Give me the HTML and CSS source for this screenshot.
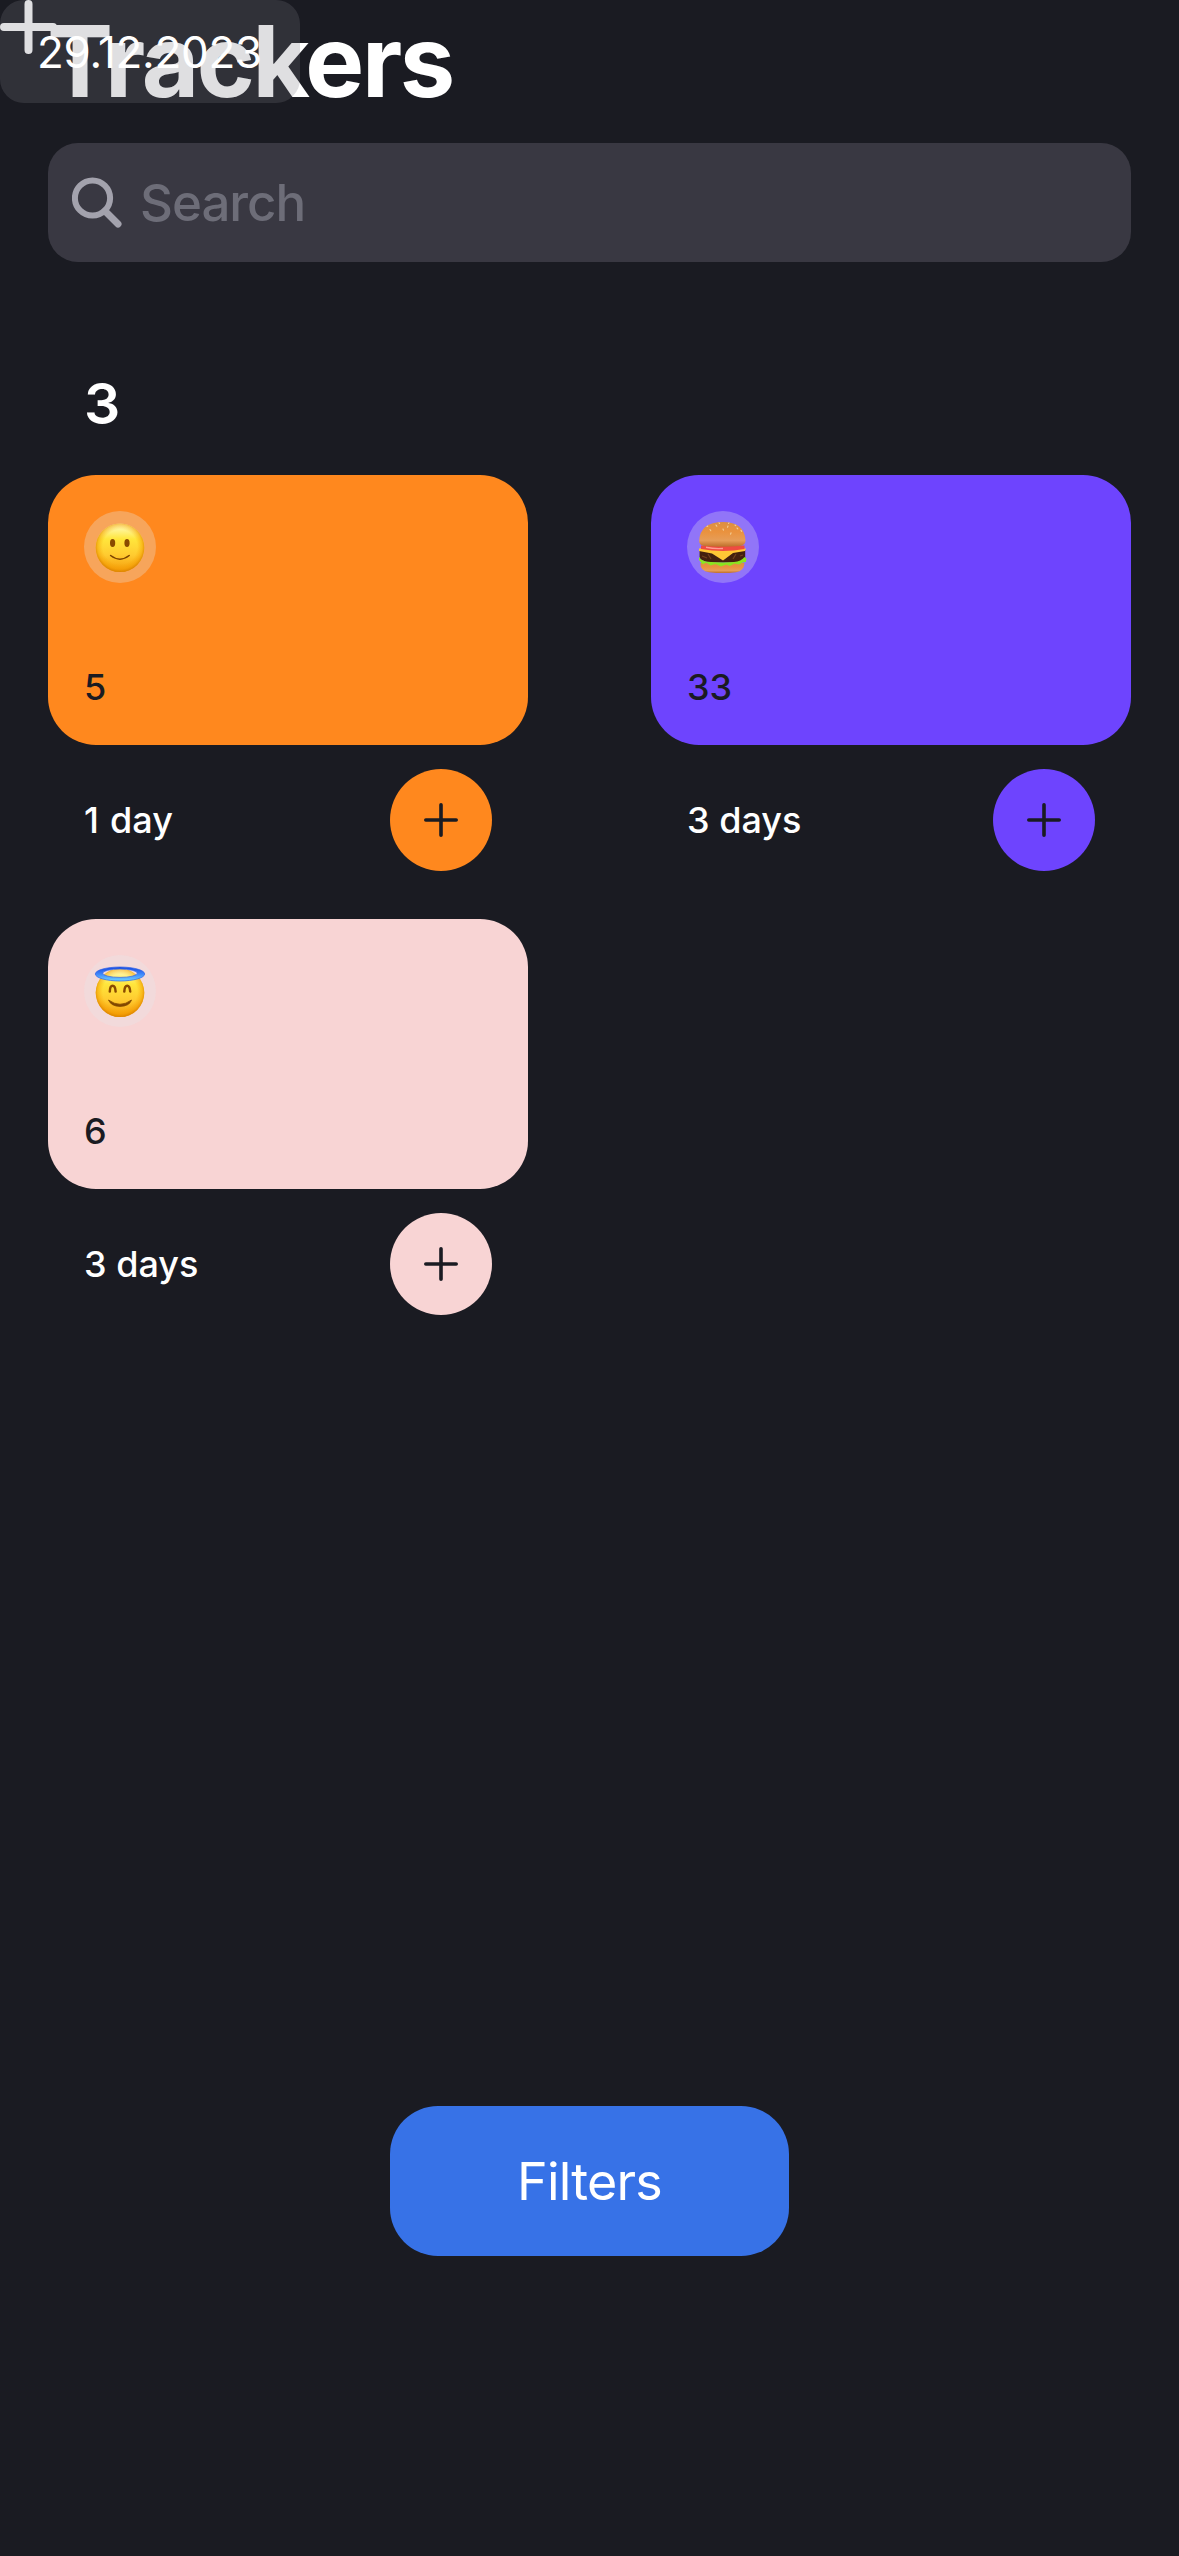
FILE: index.html
```html
<!DOCTYPE html>
<html lang="en">
<head>
<meta charset="utf-8">
<title>Trackers</title>
<link rel="stylesheet" href="styles.css">
</head>
<body>
<main class="screen">
  <h1 class="title"><span class="title-text">Trackers</span></h1>
  <svg class="add-icon" viewBox="0 0 57 54"><path d="M4 27H53M28.5 4V50"/></svg>
  <div class="date"><span class="date-text">29.12.2023</span></div>

  <div class="search">
    <svg class="search-icon" viewBox="0 0 50 52"><circle cx="20.5" cy="21" r="17.6"/><path d="M33 34L46 47"/></svg>
    <span class="search-text">Search</span>
  </div>

  <h2 class="category">3</h2>

  <section class="grid">
    <article class="tracker orange">
      <div class="card">
        <div class="badge">
          <svg class="emoji" viewBox="0 0 72 72">
            <defs>
              <linearGradient id="face" x1="0" y1="0" x2="0" y2="1"><stop offset="0" stop-color="#fff9c0"/><stop offset=".1" stop-color="#fff6a0"/><stop offset=".32" stop-color="#ffe63c"/><stop offset=".65" stop-color="#ffcb30"/><stop offset="1" stop-color="#f49a08"/></linearGradient>
              <radialGradient id="rim" cx=".5" cy=".48" r=".52"><stop offset=".68" stop-color="#f7a400" stop-opacity="0"/><stop offset=".88" stop-color="#f29a00" stop-opacity=".5"/><stop offset="1" stop-color="#d98200" stop-opacity=".95"/></radialGradient>
            </defs>
            <circle cx="36" cy="36.7" r="24.3" fill="url(#face)"/><circle cx="36" cy="36.7" r="24.3" fill="url(#rim)"/>
            <ellipse cx="28.6" cy="32" rx="2.6" ry="4.1" fill="#8a4b00"/><ellipse cx="43" cy="32" rx="2.6" ry="4.1" fill="#8a4b00"/>
            <path d="M26.6 44.5Q36 51.8 45.2 44.5" fill="none" stroke="#7b4300" stroke-width="1.5" stroke-linecap="round"/>
          </svg>
        </div>
        <span class="name">5</span>
      </div>
      <div class="footer"><span class="days one">1 day</span><span class="plus"><svg class="plus-icon" viewBox="0 0 34 34"><path d="M1.8 17H32.2M17 1.8V32.2"/></svg></span></div>
    </article>

    <article class="tracker violet">
      <div class="card">
        <div class="badge">
          <svg class="emoji" viewBox="0 0 72 72">
            <defs>
              <linearGradient id="bun" x1="0" y1="0" x2="0" y2="1"><stop offset="0" stop-color="#dc8f43"/><stop offset=".4" stop-color="#ea923e"/><stop offset=".75" stop-color="#e69d58"/><stop offset="1" stop-color="#bd6d2a"/></linearGradient>
            </defs>
            <path d="M13.4 52Q13 60 22 61.2Q36 63 49 61.2Q57 60 57.5 52Z" fill="url(#bun)"/>
            <path d="M12.6 39H58.2V47Q57 51.5 46 51.4L36 51.5L24 51.4Q13 50.5 12.6 46Z" fill="#43200f"/>
            <path d="M15 45L20 47M21 43L24 48M49 43L46 48M53 45L56 44" stroke="#71401d" stroke-width="1.2"/>
            <path d="M12 46L14 48.5Q18 51 24 51L36 51.6L47 51Q54 50.5 57.5 46L59.4 47.5L59 51L55.5 51.5L52 53.5L47.5 52.5L43 55L39 53.4L34 55.4L28.5 53L23.5 54.6L19.5 51.8L15.5 53.2L12 49Z" fill="#8be51f"/>
            <path d="M12 37.5Q36 35 59 37.5L58 40L46 42L36 49.6L25 42.5L12 40Z" fill="#ffc735"/>
            <path d="M14 34.5H57.5V38Q36 42 14 38Z" fill="#ef4b42"/><path d="M19 36.3Q27 38.1 36 37.5" fill="none" stroke="#ff9a91" stroke-width="1.4"/>
            <path d="M12.2 30Q13 11 36 11Q57 11 58.5 29Q59 34 53 35Q36 36.5 17 35Q12 34 12.2 30Z" fill="url(#bun)"/>
            <path d="M23 18.5l.8 1.2M29 14l.8 1.2M36 18l.4 1.2M41 15l-.5 1.2M44 21.8l-.4 1.4M50 17l.8.8M54 19.4l.7 1M42 11.9l-.5.6M32 11.8l.6.6M20 15.5l.8-.5M48 14l.8.6" stroke="#f3cf98" stroke-width="1.1" stroke-linecap="round"/>
          </svg>
        </div>
        <span class="name">33</span>
      </div>
      <div class="footer"><span class="days">3 days</span><span class="plus"><svg class="plus-icon" viewBox="0 0 34 34"><path d="M1.8 17H32.2M17 1.8V32.2"/></svg></span></div>
    </article>

    <article class="tracker pink">
      <div class="card">
        <div class="badge">
          <svg class="emoji" viewBox="0 0 72 72">
            <defs>
              <linearGradient id="halo" x1="0" y1="0" x2="0" y2="1"><stop offset="0" stop-color="#1749e0"/><stop offset=".5" stop-color="#3d86fa"/><stop offset="1" stop-color="#70d4ff"/></linearGradient>
            </defs>
            <circle cx="36" cy="37.7" r="24.3" fill="url(#face)"/><circle cx="36" cy="37.7" r="24.3" fill="url(#rim)"/>
            <path d="M25.8 36.5Q26 30.8 28.6 30.8Q31.3 30.8 31.6 36.5M40.3 36.5Q40.6 30.8 43.2 30.8Q45.8 30.8 46.2 36.5" fill="none" stroke="#8a4b00" stroke-width="2.5" stroke-linecap="round"/>
            <path d="M24.5 45Q36 53.5 47.5 45Q45.5 51.2 36 51.4Q27 51.2 24.5 45Z" fill="#824700" stroke="#824700" stroke-width=".8" stroke-linejoin="round"/>
            <path fill-rule="evenodd" d="M11.3 19a24.7 7 0 1 0 49.4 0a24.7 7 0 1 0 -49.4 0ZM18.7 18.2a17.3 4.2 0 1 0 34.6 0a17.3 4.2 0 1 0 -34.6 0Z" fill="url(#halo)" stroke="#2f63e6" stroke-width=".7"/>
          </svg>
        </div>
        <span class="name">6</span>
      </div>
      <div class="footer"><span class="days">3 days</span><span class="plus"><svg class="plus-icon" viewBox="0 0 34 34"><path d="M1.8 17H32.2M17 1.8V32.2"/></svg></span></div>
    </article>
  </section>

  <button class="filters"><span class="filters-text">Filters</span></button>
</main>
</body>
</html>
```
FILE: styles.css
```css
* { box-sizing: border-box; }

body {
  margin: 0;
  background: #1a1b22;
  color: #fff;
  font-family: Inter, "Liberation Sans", sans-serif;
}

.screen {
  position: relative;
  display: flex;
  flex-direction: column;
  width: 1179px;
  height: 2556px;
  padding: 0 48px 300px;
  overflow: hidden;
}

.title {
  margin: 0 0 21px -1px;
  font-size: 99px;
  font-weight: 700;
  line-height: 122px;
  letter-spacing: -2.4px;
}

/* The navigation items float over the title */
.add-icon {
  position: absolute;
  top: 0;
  left: 0;
  width: 57px;
  height: 54px;
  fill: none;
  stroke: #fff;
  stroke-width: 8;
  stroke-linecap: round;
}

.date {
  position: absolute;
  top: 0;
  left: 0;
  display: flex;
  align-items: center;
  width: 300px;
  height: 103px;
  padding-left: 37px;
  border-radius: 24px;
  background: rgba(120, 120, 128, .24);
  font-size: 44px;
  letter-spacing: -.3px;
  white-space: nowrap;
}

.search {
  display: flex;
  align-items: center;
  flex: none;
  height: 119px;
  padding-left: 24px;
  gap: 18px;
  border-radius: 30px;
  background: #393842;
  color: #6d6d78;
  font-size: 51px;
  font-weight: 450;
  letter-spacing: -1px;
}

.search-icon {
  width: 50px;
  height: 52px;
  fill: none;
  stroke: #a3a2ad;
  stroke-width: 6;
}

.search-icon path {
  stroke-width: 7;
  stroke-linecap: round;
}

.category {
  margin: 81px 0 10px;
  padding-left: 36px;
  font-size: 57px;
  font-weight: 600;
  line-height: 122px;
}

.grid {
  display: grid;
  grid-template-columns: 480px 480px;
  justify-content: space-between;
  row-gap: 48px;
}

.orange { --tint: #ff881e; }
.violet { --tint: #6e44fe; }
.pink { --tint: #f8d4d4; }

.card {
  display: flex;
  flex-direction: column;
  justify-content: space-between;
  height: 270px;
  padding: 36px 36px 31px;
  border-radius: 48px;
  background: var(--tint);
  color: #1a1b22;
}

.badge {
  width: 72px;
  height: 72px;
  border-radius: 50%;
  background: rgba(230, 232, 235, .3);
}

.emoji { display: block; }

.name, .days {
  font-size: 36px;
  font-weight: 500;
  line-height: 54px;
}

.one { word-spacing: 1.5px; }

.footer {
  display: flex;
  align-items: center;
  justify-content: space-between;
  padding: 24px 36px 0;
}

.plus {
  display: flex;
  align-items: center;
  justify-content: center;
  width: 102px;
  height: 102px;
  border-radius: 50%;
  background: var(--tint);
}

.plus-icon {
  width: 34px;
  height: 34px;
  fill: none;
  stroke: #1a1b22;
  stroke-width: 3.6;
  stroke-linecap: round;
}

.filters {
  width: 399px;
  height: 150px;
  margin: auto auto 0;
  padding: 0;
  border: 0;
  border-radius: 48px;
  background: #3772e7;
  color: #fff;
  font: 400 52px Inter, "Liberation Sans", sans-serif;
  letter-spacing: -.8px;
}
```
